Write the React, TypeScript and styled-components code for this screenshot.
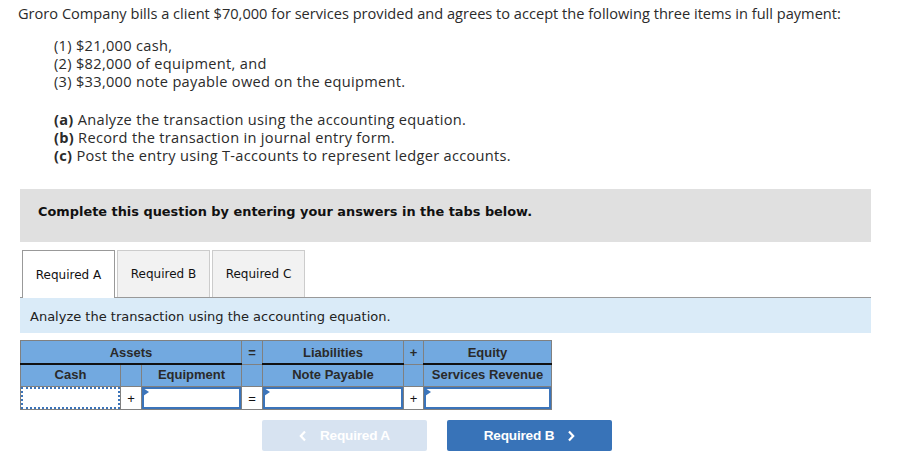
import React from 'react';
import styled, { createGlobalStyle, css } from 'styled-components';

const GlobalStyle = createGlobalStyle`
  html, body {
    margin: 0;
    padding: 0;
    background: #ffffff;
  }
  body {
    font-family: "Open Sans", "Liberation Sans", sans-serif;
    color: #222;
  }
`;

const Page = styled.div`
  width: 902px;
  padding: 4px 0 0 0;
  box-sizing: border-box;
`;

const Question = styled.div`
  padding-left: 18px;
  font-size: 14.6px;
  line-height: 18px;
  color: #2b2b2b;
`;

const Para = styled.p`
  margin: 0;
`;

const ItemList = styled.div<{ $top: number }>`
  margin-top: ${p => p.$top}px;
  padding-left: 36px;
  letter-spacing: 0.3px;
`;

const Line = styled.div``;

const Lead = styled.b`
  font-weight: 700;
`;

const Instructions = styled.div`
  margin: 25px 0 0 20px;
  width: 851px;
  height: 53px;
  box-sizing: border-box;
  padding: 15px 0 0 18px;
  background: #e0e0e0;
  font-family: "DejaVu Sans", Verdana, sans-serif;
  font-weight: 700;
  font-size: 12.9px;
  line-height: 16px;
  color: #111;
`;

const TabBar = styled.div`
  margin: 8px 0 0 20px;
  width: 851px;
  display: flex;
  gap: 2px;
  padding-left: 2px;
  box-sizing: border-box;
  border-bottom: 1px solid #999;
`;

const Tab = styled.div<{ $active?: boolean }>`
  width: 93px;
  height: 47px;
  box-sizing: border-box;
  display: flex;
  align-items: center;
  justify-content: center;
  font-family: "DejaVu Sans", Verdana, sans-serif;
  font-size: 12px;
  color: #111;
  ${p =>
    p.$active
      ? css`
          background: #fff;
          border: 1px solid #999;
          border-bottom: none;
          margin-bottom: -1px;
          height: 48px;
        `
      : css`
          background: #f2f2f2;
          border: 1px solid #ccc;
          border-bottom: none;
        `}
`;

const Prompt = styled.div`
  margin-left: 20px;
  width: 851px;
  height: 35px;
  box-sizing: border-box;
  padding: 1px 0 0 10px;
  display: flex;
  align-items: center;
  background: #daebf8;
  font-family: "DejaVu Sans", Verdana, sans-serif;
  font-size: 13px;
  color: #222;
`;

const Table = styled.table`
  margin: 7px 0 0 20px;
  border-collapse: collapse;
  table-layout: fixed;
  font-family: "Liberation Sans", Arial, sans-serif;
  font-weight: 700;
  font-size: 13px;
  color: #2a2a2a;
`;

const Head = styled.td<{ $rule?: boolean; $w?: number }>`
  height: 22px;
  padding: 0;
  text-align: center;
  background: #72a9e0;
  border: 1px solid #808080;
  ${p => p.$rule && css`border-bottom: 2px solid #111;`}
  ${p => p.$w && css`width: ${p.$w}px;`}
`;

const Label = styled(Head)`
  height: 21px;
  vertical-align: top;
  line-height: 20px;
`;

const Op = styled.td`
  height: 22px;
  padding: 0;
  text-align: center;
  background: #fff;
  border: 1px solid #808080;
  font-family: "Liberation Sans", Arial, sans-serif;
  font-weight: 400;
  font-size: 13px;
  color: #111;
`;

const Entry = styled.td`
  height: 22px;
  padding: 0;
  border: 1px solid #808080;
  background: #fff;
`;

const Field = styled.div<{ $focus?: boolean }>`
  position: relative;
  height: 22px;
  box-sizing: border-box;
  border: 2px ${p => (p.$focus ? 'dotted' : 'solid')} #3b74ba;
  background: #fff;
`;

const Flag = styled.span`
  position: absolute;
  top: -1px;
  left: -1px;
  width: 0;
  height: 0;
  border-top: 4px solid transparent;
  border-bottom: 4px solid transparent;
  border-left: 6px solid #3b74ba;
`;

const Nav = styled.div`
  margin: 10px 0 0 262px;
  display: flex;
  gap: 20px;
`;

const NavButton = styled.div<{ $disabled?: boolean }>`
  width: 165px;
  height: 31px;
  border-radius: 2px;
  display: flex;
  align-items: center;
  justify-content: center;
  gap: 13px;
  font-family: "Liberation Sans", Arial, sans-serif;
  font-weight: 700;
  font-size: 13.6px;
  letter-spacing: -0.2px;
  color: #fff;
  background: ${p => (p.$disabled ? '#d7e3f1' : '#3873b8')};
`;

const Chevron = ({ dir }: { dir: 'left' | 'right' }) => (
  <svg width="8" height="12" viewBox="0 0 8 12">
    <path
      d={dir === 'left' ? 'M6 1.5 L1.8 6 L6 10.5' : 'M2 1.5 L6.2 6 L2 10.5'}
      fill="none"
      stroke="#fff"
      strokeWidth="2.2"
    />
  </svg>
);

export default function App() {
  return (
    <Page>
      <GlobalStyle />
      <Question>
        <Para>
          Groro Company bills a client $70,000 for services provided and agrees to accept the following three items in full payment:
        </Para>
        <ItemList $top={14}>
          <Line>(1) $21,000 cash,</Line>
          <Line>(2) $82,000 of equipment, and</Line>
          <Line>(3) $33,000 note payable owed on the equipment.</Line>
        </ItemList>
        <ItemList $top={20}>
          <Line><Lead>(a)</Lead> Analyze the transaction using the accounting equation.</Line>
          <Line><Lead>(b)</Lead> Record the transaction in journal entry form.</Line>
          <Line><Lead>(c)</Lead> Post the entry using T-accounts to represent ledger accounts.</Line>
        </ItemList>
      </Question>

      <Instructions>Complete this question by entering your answers in the tabs below.</Instructions>

      <TabBar>
        <Tab $active>Required A</Tab>
        <Tab>Required B</Tab>
        <Tab>Required C</Tab>
      </TabBar>
      <Prompt>Analyze the transaction using the accounting equation.</Prompt>

      <Table>
        <tbody>
          <tr>
            <Head colSpan={3} $rule>Assets</Head>
            <Head $w={20}>=</Head>
            <Head $rule>Liabilities</Head>
            <Head $w={19}>+</Head>
            <Head $rule>Equity</Head>
          </tr>
          <tr>
            <Label $w={99}>Cash</Label>
            <Label $w={20} />
            <Label $w={99}>Equipment</Label>
            <Label />
            <Label $w={140}>Note Payable</Label>
            <Label />
            <Label $w={127}>Services Revenue</Label>
          </tr>
          <tr>
            <Entry>
              <Field $focus />
            </Entry>
            <Op>+</Op>
            <Entry>
              <Field><Flag /></Field>
            </Entry>
            <Op>=</Op>
            <Entry>
              <Field><Flag /></Field>
            </Entry>
            <Op>+</Op>
            <Entry>
              <Field><Flag /></Field>
            </Entry>
          </tr>
        </tbody>
      </Table>

      <Nav>
        <NavButton $disabled>
          <Chevron dir="left" />
          Required A
        </NavButton>
        <NavButton>
          Required B
          <Chevron dir="right" />
        </NavButton>
      </Nav>
    </Page>
  );
}
